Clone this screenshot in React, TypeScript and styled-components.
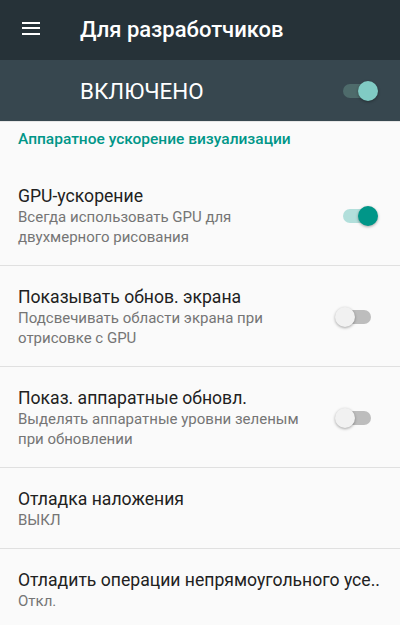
import React from "react";
import styled, { createGlobalStyle } from "styled-components";

const GlobalStyle = createGlobalStyle`
  html, body {
    margin: 0;
    padding: 0;
    background: #fafafa;
    font-family: Roboto, "Noto Sans", sans-serif;
  }
`;

const Screen = styled.div`
  width: 400px;
  height: 625px;
  overflow: hidden;
  background: #fafafa;
`;

const Toolbar = styled.header`
  height: 60px;
  background: #263238;
  display: flex;
  align-items: center;
  padding-left: 22px;
  box-sizing: border-box;
`;

const MenuIcon = styled.button`
  width: 18px;
  height: 13px;
  padding: 0;
  border: 0;
  background: transparent;
  display: flex;
  flex-direction: column;
  justify-content: space-between;
  margin-right: 40px;
  margin-top: -4px;

  span {
    display: block;
    height: 2px;
    background: #ffffff;
  }
`;

const Title = styled.h1`
  margin: 0;
  color: #ffffff;
  font-size: 22px;
  font-weight: 500;
  margin-top: -1px;
`;

const MasterBar = styled.div`
  height: 61px;
  background: #37474f;
  display: flex;
  align-items: center;
  justify-content: space-between;
  padding: 0 22px 0 80px;
  border-bottom: 1px solid #e6e6e6;
`;

const MasterLabel = styled.span`
  color: #ffffff;
  font-size: 22.4px;
  font-weight: 400;
`;

const SectionHeader = styled.div`
  padding: 8px 18px 0;
  line-height: 18px;
  font-size: 15.5px;
  font-weight: 500;
  color: #009688;
  margin-bottom: 17px;
`;

const Row = styled.div<{ $last?: boolean; $plain?: boolean }>`
  display: flex;
  align-items: center;
  padding: 20px ${({ $plain }) => ($plain ? "10px" : "22px")} 18px 18px;
  border-bottom: ${({ $last }) => ($last ? "none" : "1px solid #e0e0e0")};
`;

const RowText = styled.div<{ $wide?: boolean }>`
  flex: 1;
  min-width: 0;
  padding-right: ${({ $wide }) => ($wide ? "0" : "26px")};
`;

const RowTitle = styled.div`
  font-size: 17.6px;
  line-height: 22px;
  color: #212121;
  white-space: nowrap;
  overflow: hidden;
`;

const RowSummary = styled.div`
  font-size: 15px;
  line-height: 20px;
  color: #757575;
`;

const Track = styled.div<{ $on: boolean; $dark?: boolean }>`
  position: relative;
  width: 28px;
  height: 14px;
  border-radius: 7px;
  flex-shrink: 0;
  margin-right: 7px;
  background: ${({ $on, $dark }) =>
    $dark ? "#4e6b6b" : $on ? "#b2dfdb" : "#bdbdbd"};
`;

const Thumb = styled.div<{ $on: boolean; $dark?: boolean }>`
  position: absolute;
  top: -3px;
  left: ${({ $on }) => ($on ? "15px" : "-8px")};
  width: 20px;
  height: 20px;
  border-radius: 50%;
  background: ${({ $on, $dark }) =>
    $dark ? "#80cbc4" : $on ? "#009688" : "#f1f1f1"};
  box-shadow: 0 1px 3px rgba(0, 0, 0, 0.35);
`;

const Switch = ({ on, dark }: { on: boolean; dark?: boolean }) => (
  <Track $on={on} $dark={dark}>
    <Thumb $on={on} $dark={dark} />
  </Track>
);

type Pref = {
  title: string;
  summary: string;
  toggle?: boolean;
};

const prefs: Pref[] = [
  {
    title: "GPU-ускорение",
    summary: "Всегда использовать GPU для двухмерного рисования",
    toggle: true,
  },
  {
    title: "Показывать обнов. экрана",
    summary: "Подсвечивать области экрана при отрисовке с GPU",
    toggle: false,
  },
  {
    title: "Показ. аппаратные обновл.",
    summary: "Выделять аппаратные уровни зеленым при обновлении",
    toggle: false,
  },
  { title: "Отладка наложения", summary: "ВЫКЛ" },
  { title: "Отладить операции непрямоугольного усе..", summary: "Откл." },
];

export default function App() {
  return (
    <Screen>
      <GlobalStyle />
      <Toolbar>
        <MenuIcon aria-label="menu">
          <span />
          <span />
          <span />
        </MenuIcon>
        <Title>Для разработчиков</Title>
      </Toolbar>
      <MasterBar>
        <MasterLabel>ВКЛЮЧЕНО</MasterLabel>
        <Switch on dark />
      </MasterBar>
      <SectionHeader>Аппаратное ускорение визуализации</SectionHeader>
      {prefs.map((p, i) => {
        const plain = p.toggle === undefined;
        return (
          <Row key={p.title} $last={i === prefs.length - 1} $plain={plain}>
            <RowText $wide={plain}>
              <RowTitle>{p.title}</RowTitle>
              <RowSummary>{p.summary}</RowSummary>
            </RowText>
            {!plain && <Switch on={p.toggle!} />}
          </Row>
        );
      })}
    </Screen>
  );
}
